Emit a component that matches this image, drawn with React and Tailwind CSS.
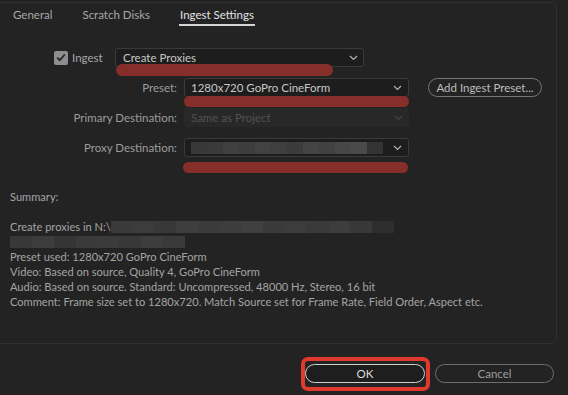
import React from "react";

const Chevron = ({ color = "#b4b4b4" }) => (
  <svg width="9" height="6" viewBox="0 0 9 6" fill="none">
    <path d="M1 1l3.5 3.5L8 1" stroke={color} strokeWidth="1.2" />
  </svg>
);

const Blur = ({ shades, w }) => (
  <div className="flex h-[12px]" style={{ width: w }}>
    {shades.map((c, i) => (
      <div key={i} className="flex-1 h-full" style={{ backgroundColor: c }} />
    ))}
  </div>
);

export default function App() {
  return (
    <div className="w-[568px] h-[395px] bg-[#232323] font-['Lato',sans-serif] text-[#a6a6a6] flex flex-col pt-[2px] overflow-hidden">
      <div className="w-[557px] h-[342px] border border-l-0 border-[#303030] rounded-r-[5px] flex flex-col">
        {/* Tabs */}
        <div className="flex gap-[30px] pl-[13px] pt-[4px] text-[11.5px] leading-[16px]">
          <span className="text-[#a8a8a8]">General</span>
          <span className="text-[#a8a8a8]">Scratch Disks</span>
          <span className="text-[#e2e2e2] border-b-2 border-[#d4d4d4] pb-[1px] -mx-[1px] px-[1px]">Ingest Settings</span>
        </div>

        {/* Ingest row */}
        <div className="mt-[22px] flex items-center h-[19px] pl-[54px] text-[11.5px]">
          <div className="w-[14px] h-[14px] rounded-[2px] bg-[#8e8e8e] flex items-center justify-center">
            <svg width="10" height="9" viewBox="0 0 10 9" fill="none">
              <path d="M1.2 4.6l2.6 2.6L8.8 1.5" stroke="#262626" strokeWidth="1.8" />
            </svg>
          </div>
          <span className="ml-[4px] w-[43px] text-[#a8a8a8]">Ingest</span>
          <div className="relative w-[249px] h-[19px] bg-[#1d1d1d] border border-[#3a3a3a] rounded-[3px] flex items-center justify-between pl-[7px] pr-[5px]">
            <span className="text-[#c8c8c8]">Create Proxies</span>
            <Chevron />
            <div className="absolute left-0 top-[15px] w-[217px] h-[12px] rounded-full bg-[#862e29]" />
          </div>
        </div>

        {/* Preset row */}
        <div className="mt-[11px] flex items-center h-[19px] text-[11.5px]">
          <span className="w-[177px] text-right text-[#9c9c9c]">Preset:</span>
          <div className="relative ml-[7px] w-[225px] h-[19px] bg-[#1d1d1d] border border-[#3a3a3a] rounded-[3px] flex items-center justify-between pl-[6px] pr-[6px]">
            <span className="text-[#c8c8c8]">1280x720 GoPro CineForm</span>
            <Chevron />
            <div className="absolute -left-[1px] top-[17px] w-[225px] h-[11px] rounded-full bg-[#862e29]" />
          </div>
          <div className="ml-[19px] w-[114px] h-[19px] rounded-full border border-[#777] flex items-center justify-center text-[#bdbdbd]">
            Add Ingest Preset...
          </div>
        </div>

        {/* Primary Destination */}
        <div className="mt-[11px] flex items-center h-[19px] text-[11.5px]">
          <span className="w-[177px] text-right text-[#9c9c9c]">Primary Destination:</span>
          <div className="ml-[7px] w-[225px] h-[19px] bg-[#282828] rounded-[3px] flex items-center justify-between pl-[7px] pr-[6px]">
            <span className="text-[#525252]">Same as Project</span>
            <Chevron color="#444" />
          </div>
        </div>

        {/* Proxy Destination */}
        <div className="mt-[11px] flex items-center h-[19px] text-[11.5px]">
          <span className="w-[177px] text-right text-[#9c9c9c]">Proxy Destination:</span>
          <div className="relative ml-[7px] w-[225px] h-[19px] bg-[#1d1d1d] border border-[#3a3a3a] rounded-[3px] flex items-center justify-between pl-[6px] pr-[6px]">
            <Blur
              w={192}
              shades={["#383838", "#3a3a3a", "#404040", "#3d3d3d", "#424242", "#3f3f3f", "#3b3b3b", "#444444", "#414141", "#474747", "#4a4a4a", "#333333"]}
            />
            <Chevron />
            <div className="absolute -left-[2px] top-[23px] w-[225px] h-[11px] rounded-full bg-[#862e29]" />
          </div>
        </div>

        {/* Summary */}
        <div className="mt-[32px] pl-[10px] text-[11.1px] leading-[15px] text-[#a4a4a4] flex flex-col">
          <span>Summary:</span>
          <span className="h-[15px]" />
          <div className="flex items-center">
            <span>Create proxies in N:\</span>
            <Blur
              w={283}
              shades={["#3a3a3a", "#3c3c3c", "#383838", "#3e3e3e", "#3b3b3b", "#3d3d3d", "#404040", "#3a3a3a", "#3c3c3c", "#393939", "#3d3d3d", "#383838", "#2e2e2e"]}
            />
          </div>
          <div className="h-[15px] flex items-center">
            <Blur
              w={175}
              shades={["#383838", "#3c3c3c", "#353535", "#3a3a3a", "#3b3b3b", "#383838", "#3d3d3d", "#3a3a3a"]}
            />
          </div>
          <span>Preset used: 1280x720 GoPro CineForm</span>
          <span>Video: Based on source, Quality 4, GoPro CineForm</span>
          <span>Audio: Based on source. Standard: Uncompressed, 48000 Hz, Stereo, 16 bit</span>
          <span>Comment: Frame size set to 1280x720. Match Source set for Frame Rate, Field Order, Aspect etc.</span>
        </div>
      </div>

      {/* Buttons */}
      <div className="mt-[20px] flex justify-end pr-[14px] gap-[10px] text-[11.5px]">
        <div className="relative w-[120px] h-[19px] rounded-full border border-[#cfcfcf] bg-[#1e1e1e] flex items-center justify-center text-[#dedede]">
          OK
          <div className="absolute -left-[5px] -right-[6px] -top-[8px] -bottom-[9px] border-[4px] border-[#e0392d] rounded-[7px]" />
        </div>
        <div className="w-[119px] h-[19px] rounded-full border border-[#6e6e6e] flex items-center justify-center text-[#9e9e9e]">
          Cancel
        </div>
      </div>
    </div>
  );
}
